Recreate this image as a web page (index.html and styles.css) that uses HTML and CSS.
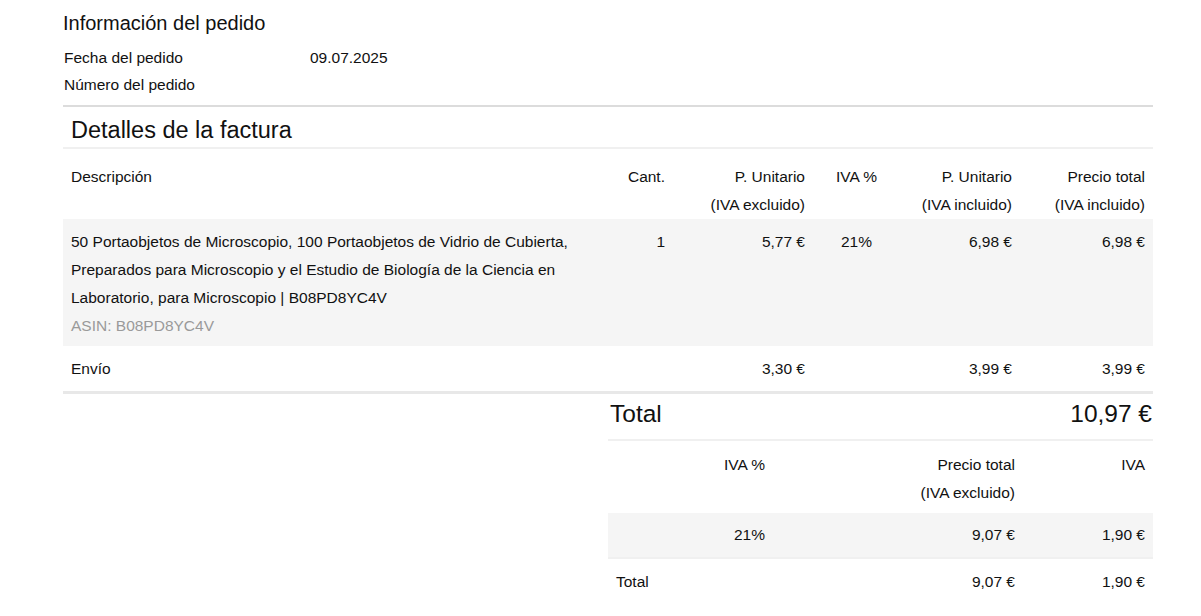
FILE: index.html
```html
<!DOCTYPE html>
<html lang="es">
<head>
<meta charset="utf-8">
<title>Factura</title>
<link rel="stylesheet" href="styles.css">
</head>
<body>
<div class="page">
  <section class="order-info">
    <h2 class="order-title">Información del pedido</h2>
    <div class="info-grid">
      <div class="info-label">Fecha del pedido</div>
      <div class="info-value">09.07.2025</div>
      <div class="info-label">Número del pedido</div>
      <div class="info-value"></div>
    </div>
  </section>

  <section class="invoice">
    <h2 class="invoice-title">Detalles de la factura</h2>
    <table class="items">
      <colgroup>
        <col class="c-desc"><col class="c-qty"><col class="c-unit"><col class="c-vat"><col class="c-unitinc"><col class="c-total">
      </colgroup>
      <thead>
        <tr>
          <th class="left">Descripción</th>
          <th class="right">Cant.</th>
          <th class="right">P. Unitario<br>(IVA excluido)</th>
          <th class="center">IVA %</th>
          <th class="right">P. Unitario<br>(IVA incluido)</th>
          <th class="right">Precio total<br>(IVA incluido)</th>
        </tr>
      </thead>
      <tbody>
        <tr class="product">
          <td class="left">50 Portaobjetos de Microscopio, 100 Portaobjetos de Vidrio de Cubierta, Preparados para Microscopio y el Estudio de Biología de la Ciencia en Laboratorio, para Microscopio | B08PD8YC4V<div class="asin">ASIN: B08PD8YC4V</div></td>
          <td class="right">1</td>
          <td class="right">5,77 €</td>
          <td class="center">21%</td>
          <td class="right">6,98 €</td>
          <td class="right">6,98 €</td>
        </tr>
        <tr class="shipping">
          <td class="left">Envío</td>
          <td class="right"></td>
          <td class="right">3,30 €</td>
          <td class="center"></td>
          <td class="right">3,99 €</td>
          <td class="right">3,99 €</td>
        </tr>
      </tbody>
    </table>

    <div class="summary">
      <div class="grand-total">
        <span>Total</span>
        <span>10,97 €</span>
      </div>
      <table class="vat">
        <colgroup>
          <col class="v-label"><col class="v-rate"><col class="v-net"><col class="v-tax">
        </colgroup>
        <thead>
          <tr>
            <th></th>
            <th class="right">IVA %</th>
            <th class="right">Precio total<br>(IVA excluido)</th>
            <th class="right">IVA</th>
          </tr>
        </thead>
        <tbody>
          <tr class="vat-row">
            <td></td>
            <td class="right">21%</td>
            <td class="right">9,07 €</td>
            <td class="right">1,90 €</td>
          </tr>
          <tr class="vat-total">
            <td class="left">Total</td>
            <td></td>
            <td class="right">9,07 €</td>
            <td class="right">1,90 €</td>
          </tr>
        </tbody>
      </table>
    </div>
  </section>
</div>
</body>
</html>
```

FILE: styles.css
```css
* { box-sizing: border-box; }

html, body {
  margin: 0;
  padding: 0;
  background: #ffffff;
}

body {
  font-family: "Liberation Sans", Arial, Helvetica, sans-serif;
  color: #111111;
  font-size: 15.5px;
}

.page {
  width: 1090px;
  margin-left: 63px;
  padding-top: 10px;
}

.order-title {
  font-size: 20px;
  font-weight: normal;
  margin: 0;
  line-height: 26px;
}

.order-info {
  border-bottom: 2px solid #dcdcdc;
  padding-bottom: 7px;
}

.info-grid {
  display: grid;
  grid-template-columns: 246px 1fr;
  padding-left: 1px;
  padding-top: 8px;
  row-gap: 0;
  line-height: 27px;
}

.info-value { min-height: 27px; }

.invoice-title {
  font-size: 23.5px;
  font-weight: normal;
  margin: 0;
  padding: 10px 8px 4px;
  line-height: 26px;
  border-bottom: 2px solid #f0f0f0;
}

table {
  border-collapse: collapse;
  table-layout: fixed;
  width: 100%;
}

th, td {
  font-weight: normal;
  vertical-align: top;
  line-height: 28px;
  padding: 0 8px;
  font-size: 15.5px;
}

.left { text-align: left; }
.right { text-align: right; }
.center { text-align: center; }

.c-desc { width: 545px; }
.c-qty { width: 65px; }
.c-unit { width: 140px; }
.c-vat { width: 87px; }
.c-unitinc { width: 120px; }
.c-total { width: 133px; }

.items thead th {
  padding-top: 14px;
  padding-bottom: 0;
}

.items .product td {
  background: #f5f5f5;
  padding-top: 9px;
  padding-bottom: 6px;
}

.asin { color: #9a9a9a; }

.items .shipping td {
  padding-top: 9px;
  padding-bottom: 8px;
}

.items tbody tr:last-child td {
  border-bottom: 3px solid #e8e8e8;
}

.summary {
  margin-left: 545px;
}

.grand-total {
  display: flex;
  justify-content: space-between;
  align-items: center;
  font-size: 24.5px;
  height: 47px;
  padding: 0 1px 6px 2px;
  border-bottom: 2px solid #f0f0f0;
}

.v-label { width: 80px; }
.v-rate { width: 85px; }
.v-net { width: 250px; }
.v-tax { width: 130px; }

.vat thead th {
  padding-top: 10px;
  padding-bottom: 6px;
}

.vat .vat-row td {
  background: #f5f5f5;
  padding-top: 8px;
  padding-bottom: 8px;
  border-bottom: 2px solid #f0f0f0;
}

.vat .vat-total td {
  padding-top: 9px;
  padding-bottom: 8px;
}
```
